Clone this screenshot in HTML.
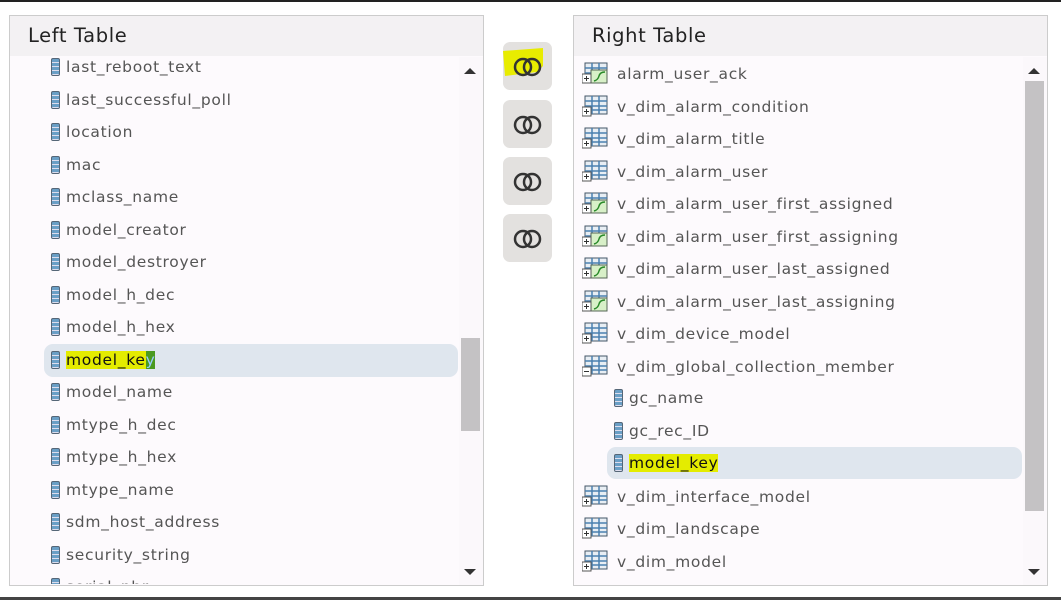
<!DOCTYPE html><html><head><style>
body{margin:0;width:1061px;height:600px;background:#fff;position:relative;overflow:hidden;font-family:"DejaVu Sans","Liberation Sans",sans-serif;}
.bar{position:absolute;left:0;width:1061px;background:#222}
.panel{position:absolute;top:15px;width:473px;height:569px;border:1px solid #ccc;background:#fdfafd;overflow:hidden}
.hdr{position:absolute;left:0;top:0;right:0;height:40px;background:#f3f1f3;font-size:19.5px;letter-spacing:0.6px;color:#222;line-height:40px;padding-left:18px}
.row{position:absolute;font-size:15.5px;letter-spacing:0.7px;color:#555;height:20px;line-height:20px;white-space:nowrap}
.fi{display:inline-block;width:9px;height:18px;border:1px solid #567;border-radius:2px;background:repeating-linear-gradient(#6a9fc6 0 3px,#dde 3px 4px);vertical-align:-4px;margin-right:6px;box-sizing:border-box}
.ti{display:inline-block;width:26px;height:22px;vertical-align:-5px;margin-right:9px}
.sb{position:absolute;background:#fbf8fb}
.thumb{position:absolute;background:#c4c2c4}
.sel{position:absolute;background:#dfe6ee;border-radius:9px}
.hl{background:#e4ec00;color:#111}
.btn{position:absolute;left:503px;width:49px;height:48px;background:#e3e1df;border-radius:7px;overflow:hidden}
.arr{position:absolute;width:0;height:0;border-left:6px solid transparent;border-right:6px solid transparent}
</style></head><body>
<div class="bar" style="top:0;height:2px"></div>
<div class="bar" style="top:597px;height:3px;background:#444"></div>

<div class="panel" style="left:9px">
<div class="hdr">Left Table</div>
<div class="sb" style="left:449px;top:41px;width:24px;height:528px"></div>
<div class="thumb" style="left:451px;top:322px;width:19px;height:93px"></div>
<div class="arr" style="left:454px;top:52px;border-bottom:6px solid #333"></div>
<div class="arr" style="left:454px;top:553px;border-top:6px solid #333"></div>
<div class="sel" style="left:34px;top:328px;width:414px;height:33px"></div>
</div>
<div id="L"></div>

<div class="panel" style="left:573px">
<div class="hdr">Right Table</div>
<div class="sb" style="left:449px;top:41px;width:24px;height:528px"></div>
<div class="thumb" style="left:451px;top:65px;width:19px;height:430px"></div>
<div class="arr" style="left:454px;top:52px;border-bottom:6px solid #333"></div>
<div class="arr" style="left:454px;top:553px;border-top:6px solid #333"></div>
<div class="sel" style="left:33px;top:431px;width:415px;height:32px"></div>
</div>
<div id="R"></div>

<div class="btn" style="top:42px"><svg width="49" height="48"><path d="M0 9 L40 6 L40 24 L34 30 L2 34Z" fill="#e8ec00"/><circle cx="20" cy="25" r="8" fill="none" stroke="#333" stroke-width="2.5"/><circle cx="29" cy="25" r="8" fill="none" stroke="#333" stroke-width="2.5"/></svg></div>
<div class="btn" style="top:100px"><svg width="49" height="48"><circle cx="20" cy="25" r="8" fill="none" stroke="#333" stroke-width="2.5"/><circle cx="29" cy="25" r="8" fill="none" stroke="#333" stroke-width="2.5"/></svg></div>
<div class="btn" style="top:157px"><svg width="49" height="48"><circle cx="20" cy="25" r="8" fill="none" stroke="#333" stroke-width="2.5"/><circle cx="29" cy="25" r="8" fill="none" stroke="#333" stroke-width="2.5"/></svg></div>
<div class="btn" style="top:214px"><svg width="49" height="48"><circle cx="20" cy="25" r="8" fill="none" stroke="#333" stroke-width="2.5"/><circle cx="29" cy="25" r="8" fill="none" stroke="#333" stroke-width="2.5"/></svg></div>

<script>
var L=["last_reboot_text","last_successful_poll","location","mac","mclass_name","model_creator","model_destroyer","model_h_dec","model_h_hex","model_key","model_name","mtype_h_dec","mtype_h_hex","mtype_name","sdm_host_address","security_string","serial_nbr"];
var h="";
L.forEach(function(t,i){var y=57+32.5*i;var tx=t;if(t=="model_key")tx='<span class="hl">model_ke<span style="background:#4a9a20;color:#9cf">y</span></span>';
var clip=y>570?'clip-path:inset(0 0 '+(y+20-584)+'px 0);':'';
h+='<div class="row" style="left:51px;top:'+y+'px;'+clip+(t=="model_key"?'color:#111':'')+'"><span class="fi"></span>'+tx+'</div>';});
document.getElementById("L").outerHTML=h;
function ti(v,m){return '<svg class="ti" viewBox="0 0 26 22"><rect x="3" y="1" width="22" height="18" fill="#e8eef4" stroke="#456"/><path d="M3 6H25M3 11H25M3 15H25M10 1V19M17 1V19" stroke="#4a80b0" stroke-width="1.5"/>'+(v?'<rect x="9" y="8" width="16" height="13" fill="#d8f0c8" stroke="#565"/><path d="M12 19 Q16 18 17 14 T23 10" stroke="#2a8a2a" fill="none" stroke-width="1.5"/>':'')+'<rect x="0" y="12" width="9" height="9" fill="#fff" stroke="#555"/><path d="M2 16.5H7'+(m?'':'M4.5 14V19')+'" stroke="#333"/></svg>';}
var R=[["alarm_user_ack",1],["v_dim_alarm_condition",0],["v_dim_alarm_title",0],["v_dim_alarm_user",0],["v_dim_alarm_user_first_assigned",1],["v_dim_alarm_user_first_assigning",1],["v_dim_alarm_user_last_assigned",1],["v_dim_alarm_user_last_assigning",1],["v_dim_device_model",0],["v_dim_global_collection_member",0,1],["gc_name",2],["gc_rec_ID",2],["model_key",2],["v_dim_interface_model",0],["v_dim_landscape",0],["v_dim_model",0],["v_dim_x",0]];
h="";
R.forEach(function(r,i){var y=63+32.5*i;var clip=y>570?'clip-path:inset(0 0 '+(y+22-584)+'px 0);':'';
if(r[1]==2){h+='<div class="row" style="left:614px;top:'+y+'px;'+(r[0]=="model_key"?'color:#111':'')+'"><span class="fi"></span>'+(r[0]=="model_key"?'<span class="hl">model_key</span>':r[0])+'</div>';}
else h+='<div class="row" style="left:582px;top:'+(y-1)+'px;'+clip+'">'+ti(r[1],r[2])+(y>570?'':r[0])+'</div>';});
document.getElementById("R").outerHTML=h;
</script>
</body></html>
